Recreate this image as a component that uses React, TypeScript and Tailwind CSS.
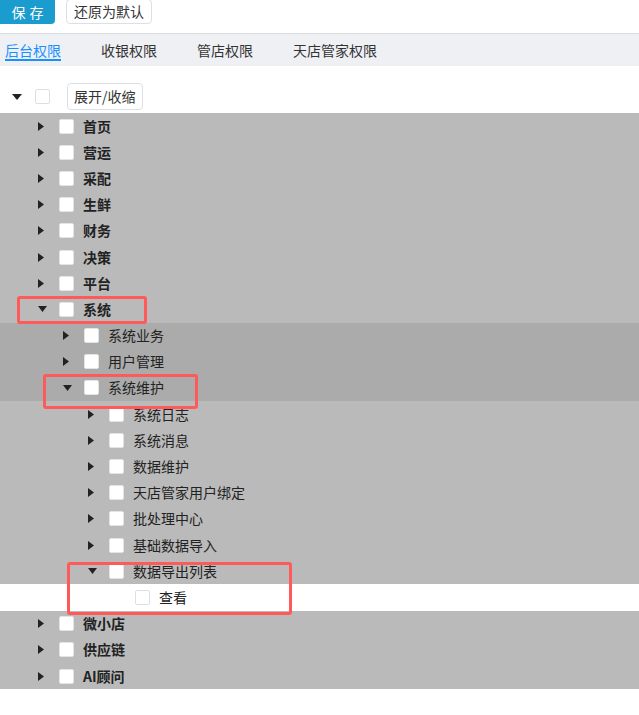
import type { ReactNode } from 'react';

type Node = {
  label: string;
  level: number;
  open?: boolean;
  leaf?: boolean;
  tone?: 'gray' | 'dark' | 'white';
};

const rows: Node[] = [
  { label: '首页', level: 0 },
  { label: '营运', level: 0 },
  { label: '采配', level: 0 },
  { label: '生鲜', level: 0 },
  { label: '财务', level: 0 },
  { label: '决策', level: 0 },
  { label: '平台', level: 0 },
  { label: '系统', level: 0, open: true },
  { label: '系统业务', level: 1, tone: 'dark' },
  { label: '用户管理', level: 1, tone: 'dark' },
  { label: '系统维护', level: 1, open: true, tone: 'dark' },
  { label: '系统日志', level: 2 },
  { label: '系统消息', level: 2 },
  { label: '数据维护', level: 2 },
  { label: '天店管家用户绑定', level: 2 },
  { label: '批处理中心', level: 2 },
  { label: '基础数据导入', level: 2 },
  { label: '数据导出列表', level: 2, open: true },
  { label: '查看', level: 3, leaf: true, tone: 'white' },
  { label: '微小店', level: 0 },
  { label: '供应链', level: 0 },
  { label: 'AI顾问', level: 0 },
];

const indent = ['pl-[38px]', 'pl-[63px]', 'pl-[88px]', 'pl-[114px]'];

function Caret({ open }: { open?: boolean }) {
  return open ? (
    <svg width="9" height="6" viewBox="0 0 9 6" className="shrink-0">
      <path d="M0 0h9L4.5 6z" fill="#222" />
    </svg>
  ) : (
    <svg width="6" height="9" viewBox="0 0 6 9" className="shrink-0">
      <path d="M0 0v9l6-4.5z" fill="#222" />
    </svg>
  );
}

function Box({ white }: { white?: boolean }) {
  return (
    <span
      className={
        white
          ? 'w-[15px] h-[15px] shrink-0 rounded-[2px] border border-[#dcdfe6] bg-white'
          : 'w-[15px] h-[15px] shrink-0 rounded-[2px] border border-[#e4e4e4] bg-white'
      }
    />
  );
}

function Mark({ className, children }: { className: string; children?: ReactNode }) {
  return (
    <div className={`absolute border-[3px] border-[#ff5a5a] rounded-[3px] pointer-events-none ${className}`}>
      {children}
    </div>
  );
}

function Row({ node }: { node: Node }) {
  const bg =
    node.tone === 'white' ? 'bg-white' : node.tone === 'dark' ? 'bg-[#ababab]' : 'bg-[#bababa]';
  return (
    <div className={`flex items-center h-[26.2px] ${bg} ${indent[node.level]}`}>
      <span className="w-[21px] flex items-center">{!node.leaf && <Caret open={node.open} />}</span>
      <Box white={node.tone === 'white'} />
      <span
        className={`ml-[9px] text-[14px] text-[#222] ${node.level === 0 ? 'font-bold' : ''}`}
      >
        {node.label}
      </span>
    </div>
  );
}

export default function App() {
  return (
    <div
      className="relative w-[639px] h-[715px] bg-white overflow-hidden"
      style={{ fontFamily: '"Noto Sans CJK SC", "Noto Sans", sans-serif' }}
    >
      <div className="flex items-start gap-[11px] h-[33px]">
        <button className="w-[55px] h-[24px] bg-[#1a9ccf] text-white text-[14px] tracking-[4px] rounded-br-[4px] pl-[4px]">
          保存
        </button>
        <button className="h-[25px] px-[7px] border border-[#dcdfe6] rounded-[4px] bg-white text-[14px] text-[#333] -mt-[1px]">
          还原为默认
        </button>
      </div>

      <div className="flex h-[33px] bg-[#eff0f4] border-t border-[#dcdcdc] pl-[5px] gap-[40px] text-[14px] text-[#333]">
        <span className="relative flex items-center text-[#1890ff]">
          后台权限
          <span className="absolute left-0 right-0 bottom-[5px] h-[2px] bg-[#1890ff]" />
        </span>
        <span className="flex items-center">收银权限</span>
        <span className="flex items-center">管店权限</span>
        <span className="flex items-center">天店管家权限</span>
      </div>

      <div className="flex items-center h-[27px] mt-[17px] mb-[3px] pl-[12px]">
        <svg width="10" height="6" viewBox="0 0 10 6" className="shrink-0">
          <path d="M0 0h10L5 6z" fill="#222" />
        </svg>
        <span className="ml-[13px] w-[15px] h-[15px] rounded-[2px] border border-[#dcdfe6] bg-white" />
        <button className="ml-[17px] h-[27px] px-[6px] border border-[#dcdfe6] rounded-[4px] bg-white text-[14px] text-[#333]">
          展开/收缩
        </button>
      </div>

      <div>
        {rows.map((n) => (
          <Row key={n.label} node={n} />
        ))}
      </div>

      <Mark className="left-[17px] top-[296px] w-[130px] h-[28px]" />
      <Mark className="left-[43px] top-[374px] w-[155px] h-[35px]" />
      <Mark className="left-[67px] top-[562px] w-[225px] h-[53px]" />
    </div>
  );
}
